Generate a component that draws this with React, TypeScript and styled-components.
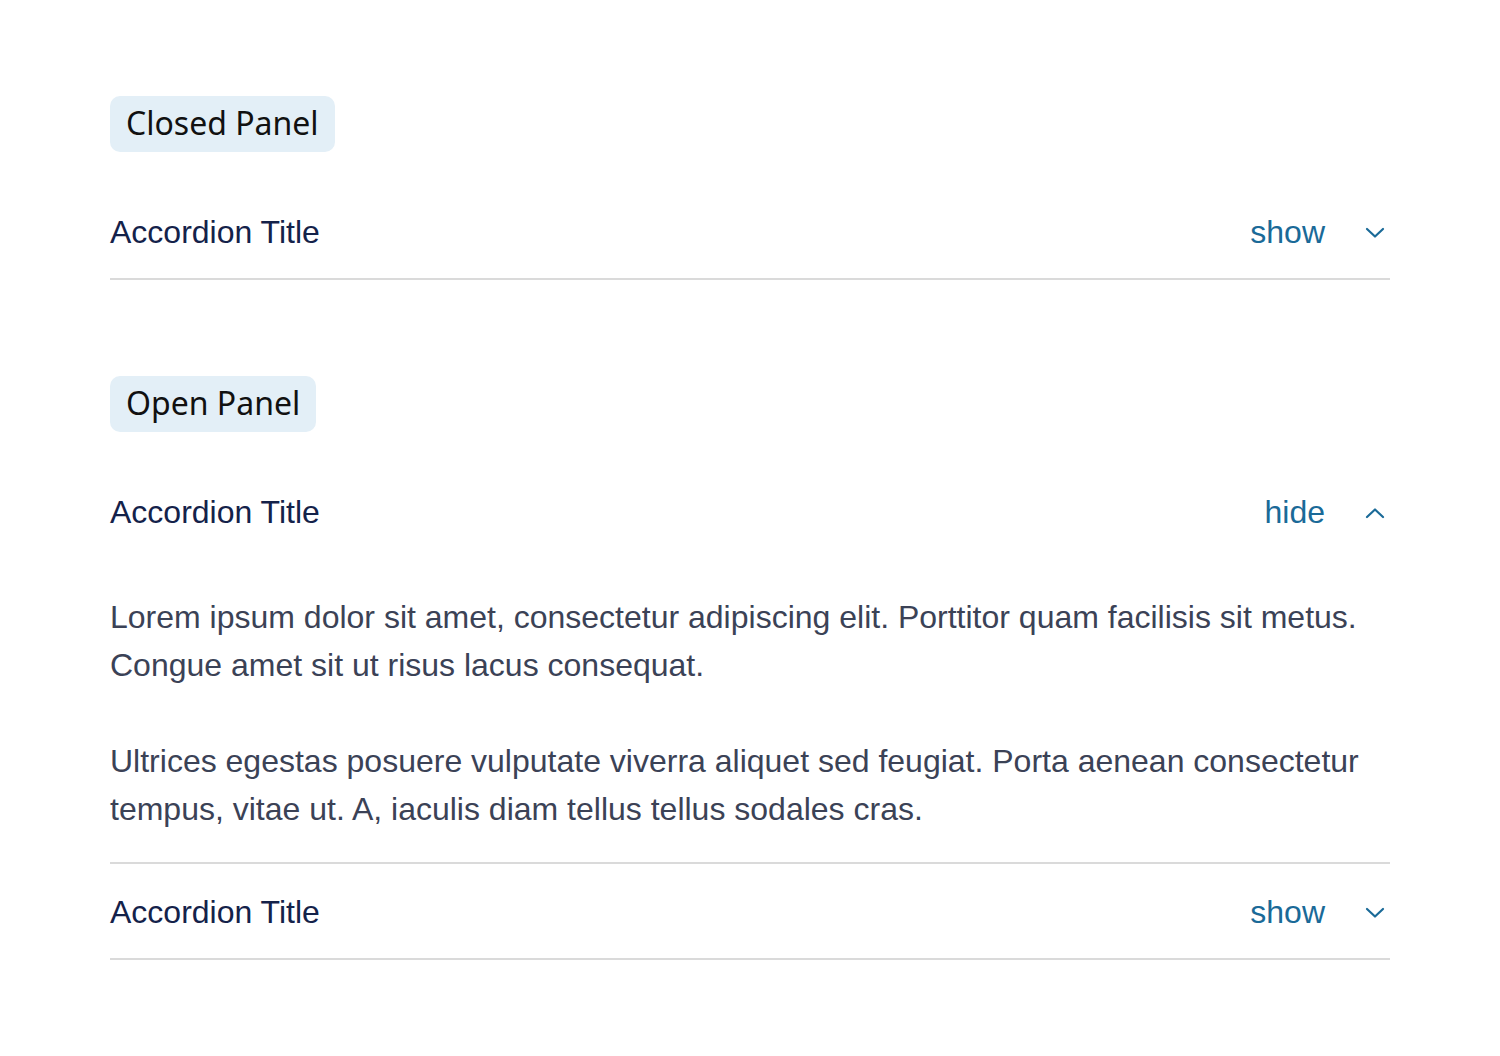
import styled, { createGlobalStyle } from 'styled-components';

const GlobalStyle = createGlobalStyle`
  body {
    margin: 0;
    background: #ffffff;
  }
`;

type Item = {
  title: string;
  open: boolean;
  body?: string[];
};

const Chevron = ({ up }: { up: boolean }) => (
  <ChevronSvg width="20" height="12" viewBox="0 0 20 12" fill="none">
    <path
      d={up ? 'M2 10 L10 2.5 L18 10' : 'M2 2 L10 9.5 L18 2'}
      stroke="currentColor"
      strokeWidth="2.2"
      strokeLinecap="round"
      strokeLinejoin="round"
    />
  </ChevronSvg>
);

const AccordionItem = ({ title, open, body }: Item) => {
  return (
    <ItemBox>
      <Header>
        <TitleText>{title}</TitleText>
        <Toggle>
          <ToggleText>{open ? 'hide' : 'show'}</ToggleText>
          <Chevron up={open} />
        </Toggle>
      </Header>
      {open && body && (
        <Body>
          {body.map((p) => (
            <Paragraph key={p}>{p}</Paragraph>
          ))}
        </Body>
      )}
    </ItemBox>
  );
};

const App = () => {
  return (
    <>
      <GlobalStyle />
      <Page>
        <Section>
          <Label>Closed Panel</Label>
          <AccordionItem title="Accordion Title" open={false} />
        </Section>
        <Section>
          <Label>Open Panel</Label>
          <div>
            <AccordionItem
              title="Accordion Title"
              open
              body={[
                'Lorem ipsum dolor sit amet, consectetur adipiscing elit. Porttitor quam facilisis sit metus. Congue amet sit ut risus lacus consequat.',
                'Ultrices egestas posuere vulputate viverra aliquet sed feugiat. Porta aenean consectetur tempus, vitae ut. A, iaculis diam tellus tellus sodales cras.',
              ]}
            />
            <AccordionItem title="Accordion Title" open={false} />
          </div>
        </Section>
      </Page>
    </>
  );
};

const Page = styled.main`
  display: flex;
  flex-direction: column;
  row-gap: 96px;
  width: 1280px;
  padding: 96px 110px;
`;

const Section = styled.section`
  display: flex;
  flex-direction: column;
  align-items: flex-start;
  row-gap: 32px;

  & > div {
    width: 100%;
  }
`;

const Label = styled.span`
  display: inline-flex;
  align-items: center;
  box-sizing: border-box;
  height: 56px;
  padding: 0 16px 3px;
  font-family: 'Noto Sans', sans-serif;
  font-size: 32px;
  color: #111111;
  background-color: #e3eff7;
  border-radius: 10px;
`;

const ItemBox = styled.div`
  width: 100%;
  border-bottom: 2px solid #dadada;
`;

const Header = styled.div`
  display: flex;
  align-items: center;
  justify-content: space-between;
  box-sizing: border-box;
  height: 94px;
  padding-top: 3px;
`;

const TitleText = styled.h3`
  margin: 0;
  font-family: 'Liberation Sans', Arial, sans-serif;
  font-size: 32px;
  font-weight: 400;
  color: #14224a;
`;

const Toggle = styled.button`
  display: flex;
  align-items: center;
  column-gap: 40px;
  padding: 0;
  border: none;
  background: none;
  color: #1a6a98;
  cursor: pointer;
`;

const ToggleText = styled.span`
  font-family: 'Liberation Sans', Arial, sans-serif;
  font-size: 32px;
`;

const ChevronSvg = styled.svg`
  display: block;
  margin-right: 5px;
`;

const Body = styled.div`
  display: flex;
  flex-direction: column;
  row-gap: 48px;
  padding: 35px 0 29px;
`;

const Paragraph = styled.p`
  margin: 0;
  font-family: 'Liberation Sans', Arial, sans-serif;
  font-size: 32px;
  line-height: 48px;
  color: #3b4256;
`;

export default App;
